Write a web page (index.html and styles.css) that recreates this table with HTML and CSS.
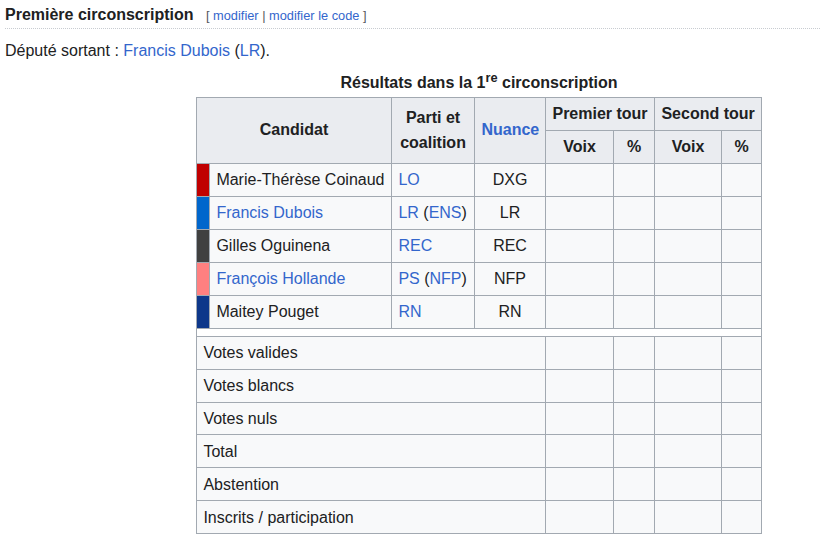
FILE: index.html
```html
<!DOCTYPE html>
<html lang="fr">
<head>
<meta charset="utf-8">
<title>Première circonscription</title>
<link rel="stylesheet" href="styles.css">
</head>
<body>
<div class="content">
  <h3 class="heading">
    <span class="headline">Première circonscription</span>
    <span class="editsection"><span class="bracket">[</span> <a href="#">modifier</a> <span class="divider">|</span> <a href="#">modifier le code</a> <span class="bracket">]</span></span>
  </h3>
  <p class="lead">Député sortant&nbsp;: <a href="#">Francis Dubois</a> (<a href="#">LR</a>).</p>

  <table class="results">
    <caption>Résultats dans la 1<sup>re</sup> circonscription</caption>
    <colgroup>
      <col class="c-color">
      <col class="c-name">
      <col class="c-party">
      <col class="c-nuance">
      <col class="c-voix1">
      <col class="c-pct1">
      <col class="c-voix2">
      <col class="c-pct2">
    </colgroup>
    <thead>
      <tr>
        <th colspan="2" rowspan="2">Candidat</th>
        <th rowspan="2">Parti et<br>coalition</th>
        <th rowspan="2"><a href="#">Nuance</a></th>
        <th colspan="2">Premier tour</th>
        <th colspan="2">Second tour</th>
      </tr>
      <tr>
        <th>Voix</th>
        <th>%</th>
        <th>Voix</th>
        <th>%</th>
      </tr>
    </thead>
    <tbody>
      <tr>
        <td class="swatch lo"></td>
        <td>Marie-Thérèse Coinaud</td>
        <td><a href="#">LO</a></td>
        <td class="center">DXG</td>
        <td></td><td></td><td></td><td></td>
      </tr>
      <tr>
        <td class="swatch lr"></td>
        <td><a href="#">Francis Dubois</a></td>
        <td><a href="#">LR</a> (<a href="#">ENS</a>)</td>
        <td class="center">LR</td>
        <td></td><td></td><td></td><td></td>
      </tr>
      <tr>
        <td class="swatch rec"></td>
        <td>Gilles Oguinena</td>
        <td><a href="#">REC</a></td>
        <td class="center">REC</td>
        <td></td><td></td><td></td><td></td>
      </tr>
      <tr>
        <td class="swatch ps"></td>
        <td><a href="#">François Hollande</a></td>
        <td><a href="#">PS</a> (<a href="#">NFP</a>)</td>
        <td class="center">NFP</td>
        <td></td><td></td><td></td><td></td>
      </tr>
      <tr>
        <td class="swatch rn"></td>
        <td>Maitey Pouget</td>
        <td><a href="#">RN</a></td>
        <td class="center">RN</td>
        <td></td><td></td><td></td><td></td>
      </tr>
      <tr class="spacer">
        <td colspan="8"></td>
      </tr>
      <tr>
        <td colspan="4">Votes valides</td>
        <td></td><td></td><td></td><td></td>
      </tr>
      <tr>
        <td colspan="4">Votes blancs</td>
        <td></td><td></td><td></td><td></td>
      </tr>
      <tr>
        <td colspan="4">Votes nuls</td>
        <td></td><td></td><td></td><td></td>
      </tr>
      <tr>
        <td colspan="4">Total</td>
        <td></td><td></td><td></td><td></td>
      </tr>
      <tr>
        <td colspan="4">Abstention</td>
        <td></td><td></td><td></td><td></td>
      </tr>
      <tr>
        <td colspan="4">Inscrits / participation</td>
        <td></td><td></td><td></td><td></td>
      </tr>
    </tbody>
  </table>
</div>
</body>
</html>
```

FILE: styles.css
```css
html, body {
  margin: 0;
  padding: 0;
  background: #ffffff;
}

body {
  font-family: "Liberation Sans", Arial, sans-serif;
  font-size: 16px;
  line-height: 1.6;
  color: #202122;
}

a {
  color: #3366cc;
  text-decoration: none;
}

.content {
  padding: 0 0 0 5px;
}

.heading {
  margin: 0;
  padding: 2px 0 0 0;
  font-size: 16px;
  font-weight: bold;
  line-height: 1.6;
  border-bottom: 1px dotted #c8ccd1;
}

.editsection {
  font-size: 12.8px;
  font-weight: normal;
  margin-left: 8px;
  color: #54595d;
}

.lead {
  margin: 9px 0 0 0;
}

.results {
  margin: 7px 0 0 191px;
  border-collapse: collapse;
  table-layout: fixed;
  width: 565px;
  background: #f8f9fa;
  color: #202122;
  border: 1px solid #a2a9b1;
}

.results caption {
  font-weight: bold;
  padding: 0 0 1px 0;
  text-align: center;
}

.results sup {
  font-size: 0.8em;
  line-height: 1;
  vertical-align: 0.45em;
}

.c-color { width: 13px; }
.c-name { width: 182px; }
.c-party { width: 83px; }
.c-nuance { width: 71px; }
.c-voix1 { width: 68px; }
.c-pct1 { width: 41px; }
.c-voix2 { width: 67px; }
.c-pct2 { width: 40px; }

.results th,
.results td {
  border: 1px solid #a2a9b1;
  padding: 3.2px 6.4px;
  white-space: nowrap;
}

.results th {
  background: #eaecf0;
  text-align: center;
  font-weight: bold;
}

.results td {
  text-align: left;
}

.results td.center {
  text-align: center;
}

.swatch.lo { background: #c00000; }
.swatch.lr { background: #0066cc; }
.swatch.rec { background: #404040; }
.swatch.ps { background: #ff8080; }
.swatch.rn { background: #0d378a; }

.results .spacer td {
  background: #ffffff;
  padding: 3.5px 0;
  height: 0;
}
```
